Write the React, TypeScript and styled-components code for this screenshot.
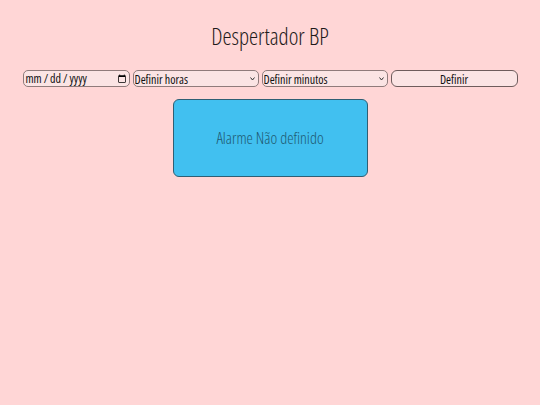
import React from 'react';
import styled, { createGlobalStyle } from 'styled-components';

const GlobalStyle = createGlobalStyle`
  html, body {
    margin: 0;
    padding: 0;
    background: #ffd6d6;
  }
  body {
    font-family: "Open Sans", "Liberation Sans", sans-serif;
    font-stretch: 75%;
  }
`;

const Page = styled.div`
  display: flex;
  flex-direction: column;
  align-items: center;
  padding-top: 20px;
`;

const Title = styled.h1`
  margin: 0;
  font-size: 23px;
  font-weight: 300;
  color: #1e1a1a;
  line-height: 32px;
`;

const Controls = styled.div`
  display: flex;
  align-items: center;
  gap: 3px;
  margin-top: 18px;
`;

const controlBase = `
  box-sizing: border-box;
  height: 17px;
  margin: 0;
  font-family: "Open Sans", "Roboto Condensed", sans-serif;
  font-stretch: 75%;
  font-weight: 400;
  font-size: 12px;
  background: #fbe4e4;
  border: 1px solid #8f7b7b;
  color: #111;
`;

const Field = styled.input`
  ${controlBase}
  width: 107px;
  padding: 0 2px 0 1px;
  border-radius: 5px;

  &::-webkit-datetime-edit {
    padding: 0;
  }
  &::-webkit-datetime-edit-text {
    padding: 0 1px;
  }
  &::-webkit-calendar-picker-indicator {
    margin: 0;
    padding: 0;
    width: 10px;
    height: 10px;
  }
`;

const SelectWrap = styled.div<{ $w: number }>`
  position: relative;
  display: flex;
  width: ${({ $w }) => $w}px;
`;

const Select = styled.select`
  ${controlBase}
  width: 100%;
  padding: 0 12px 0 1px;
  border-radius: 5px;
  appearance: none;
  -webkit-appearance: none;
`;

const Chevron = styled.svg`
  position: absolute;
  right: 4px;
  top: 7px;
  width: 5px;
  height: 4px;
  pointer-events: none;
`;

const Button = styled.button`
  ${controlBase}
  width: 127px;
  padding: 0;
  border: 1px solid #6e5c5c;
  border-radius: 6px;
`;

const AlarmBox = styled.div`
  box-sizing: border-box;
  width: 195px;
  height: 78px;
  margin-top: 12px;
  display: flex;
  align-items: center;
  justify-content: center;
  background: #41c0f0;
  border: 1px solid #2f5f74;
  border-radius: 6px;
  font-size: 16px;
  font-weight: 300;
  color: #1f5a72;
`;

function Dropdown({ width, label }: { width: number; label: string }) {
  return (
    <SelectWrap $w={width}>
      <Select defaultValue="">
        <option value="">{label}</option>
      </Select>
      <Chevron viewBox="0 0 5 4">
        <path d="M0.5 0.5 L2.5 3 L4.5 0.5" fill="none" stroke="#333" strokeWidth="1" />
      </Chevron>
    </SelectWrap>
  );
}

export default function App() {
  return (
    <>
      <GlobalStyle />
      <Page>
        <Title>Despertador BP</Title>
        <Controls>
          <Field type="date" />
          <Dropdown width={126} label="Definir horas" />
          <Dropdown width={126} label="Definir minutos" />
          <Button>Definir</Button>
        </Controls>
        <AlarmBox>Alarme Não definido</AlarmBox>
      </Page>
    </>
  );
}
